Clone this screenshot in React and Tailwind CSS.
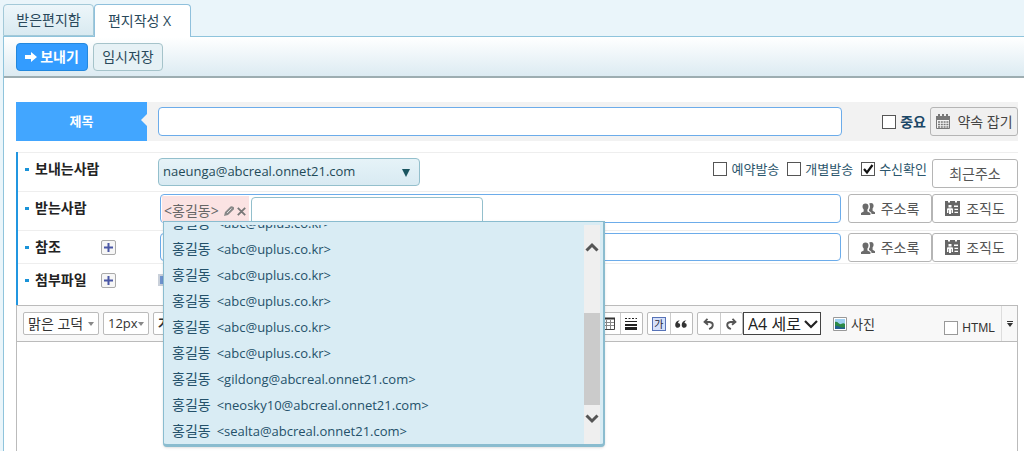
import React, { useState } from 'react';

const contacts = [
  'abc@uplus.co.kr',
  'abc@uplus.co.kr',
  'abc@uplus.co.kr',
  'abc@uplus.co.kr',
  'abc@uplus.co.kr',
  'abc@uplus.co.kr',
  'gildong@abcreal.onnet21.com',
  'neosky10@abcreal.onnet21.com',
  'sealta@abcreal.onnet21.com',
];

const Check = ({ label, checked, onChange, className = '', box = 'border-[#555]' }) => (
  <label className={`flex items-center gap-1 whitespace-nowrap ${className}`}>
    <span className="relative block h-3.5 w-3.5">
      <input type="checkbox" checked={checked} onChange={onChange} className={`block h-3.5 w-3.5 appearance-none border bg-white ${box}`} />
      {checked && (
        <svg viewBox="0 0 14 14" className="pointer-events-none absolute inset-0 h-3.5 w-3.5">
          <path d="M3 7l3 3.5L11.5 3" fill="none" stroke="#111" strokeWidth="2.2" />
        </svg>
      )}
    </span>
    {label}
  </label>
);

const GrayButton = ({ children, className = '' }) => (
  <button className={`flex h-[29px] items-center justify-center gap-1.5 rounded-[3px] border border-[#b5b5b5] text-sm leading-5 whitespace-nowrap ${className}`}>
    {children}
  </button>
);

const PeopleIcon = () => (
  <svg viewBox="0 0 14 14" className="h-3.5 w-3.5" fill="#6b6b6b">
    <path d="M8.2 1.600C8.700 1.200 9.300 1 10 1c1.700 0 2.600 1.200 2.600 2.800 0 1-.4 2-1 2.600v2.400l2.400 1.400V12H10.600c-.2-1.200-.6-1.700-1.400-2.200L8 9V7.800c.7-.8 1-1.900 1-3.100 0-1.200-.3-2.300-.8-3.100z" />
    <path d="M4.500 1.500c1.900 0 3 1.300 3 3.100 0 1.200-.4 2.200-1.100 2.900v2l3 1.500V13H0v-2l2.700-1.500v-2C2 6.800 1.500 5.800 1.500 4.600c0-1.800 1.100-3.100 3-3.100z" />
  </svg>
);

const OrgIcon = () => (
  <svg viewBox="0 0 15 15" className="h-[15px] w-[15px]">
    <path fill="#666" d="M0 0h3v1.500h2V0h5v1.500h2V0h3v15H0z" />
    <path fill="#fff" d="M3.500 4h3v2.500h-3zM2 12V8.500c0-.8.5-1.200 1.200-1.200h3.600c.7 0 1.200.4 1.200 1.200V12H6.600V9H6v4H4V9h-.6v3zM9 4.500h4V6H9zM9.500 7.800H13V9H9.500zM9.500 10.800H13V12H9.500z" />
  </svg>
);

const CalendarIcon = () => (
  <svg viewBox="0 0 16 15" className="h-[15px] w-4">
    <path fill="#777" d="M1 2h2V0h2v2h2V0h2v2h2V0h2v2h2v4H1z" />
    <path fill="#f4f4f4" stroke="#777" d="M1.500 5.500h13v9h-13z" />
    <path d="M3 8h10.500M3 10.500h10.500M3 13h10.500" stroke="#777" strokeWidth="1.500" strokeDasharray="2 .8" />
  </svg>
);

const Plus = ({ label }) => (
  <button aria-label={label} className="flex h-[15px] w-[15px] items-center justify-center rounded-[2px] border border-[#aaa] bg-[#f6f6f6]">
    <svg viewBox="0 0 9 9" className="h-[9px] w-[9px]"><path d="M4.500 0v9M0 4.500h9" stroke="#4a57a5" strokeWidth="2" /></svg>
  </button>
);

const Row = ({ label, htmlFor, plus, height, children }) => (
  <div className={`flex items-start border-t border-[#eee] pt-[2px] ${height}`}>
    <div className="flex h-7 w-[140px] shrink-0 items-center pl-[7px]">
      <span className="mr-1.5 h-[3px] w-1 bg-[#1a93d8]" />
      <label htmlFor={htmlFor} className="w-[66px] text-sm leading-5 font-bold whitespace-nowrap text-[#222]">{label}</label>
      {plus && <Plus label={plus} />}
    </div>
    {children}
  </div>
);

const AddressButtons = () => (
  <div className="ml-[7px] flex">
    <GrayButton className="w-[84px] bg-white text-[#555]"><PeopleIcon />주소록</GrayButton>
    <GrayButton className="w-[86px] bg-white text-[#555]"><OrgIcon />조직도</GrayButton>
  </div>
);

const Suggestions = () => (
  <div className="absolute top-[26px] left-[2px] z-10 flex h-[226px] w-[442px] rounded-b-[4px] border border-r-[2px] border-b-[3px] border-[#8abccf] bg-[#d9ecf4] pt-[3px] pr-[3px] shadow-sm">
    <ul className="flex flex-1 flex-col justify-end overflow-hidden text-[13px] text-[#24516a]">
      {contacts.map((email, i) => (
        <li key={i} className="flex h-[26px] shrink-0 gap-1.5 pl-2 leading-[26px] whitespace-nowrap">
          <span className="text-sm leading-[26px]">홍길동</span>
          <span>&lt;{email}&gt;</span>
        </li>
      ))}
    </ul>
    <div className="flex w-4 flex-col items-center bg-[#efefef]">
      <svg viewBox="0 0 14 10" className="mt-[17px] h-2.5 w-3.5"><path d="M1.500 8.500L7 3l5.500 5.500" fill="none" stroke="#555" strokeWidth="3" /></svg>
      <div className="mt-[61px] h-[92px] w-4 bg-[#cbcbcb]" />
      <svg viewBox="0 0 14 10" className="mt-[9px] h-2.5 w-3.5"><path d="M1.500 1.500L7 7l5.500-5.500" fill="none" stroke="#555" strokeWidth="3" /></svg>
    </div>
  </div>
);

const Tool = ({ label, children }) => (
  <button aria-label={label} className="flex h-full flex-1 items-center justify-center border-l border-[#ccc] first:border-l-0">{children}</button>
);

const toolGroup = 'flex h-[23px] shrink-0 items-center rounded-[2px] border border-[#bbb] bg-white';

const Caret = () => (
  <svg viewBox="0 0 6 4" className="h-1 w-1.5"><path d="M0 0h6L3 4z" fill="#888" /></svg>
);

const EditorToolbar = () => {
  const [html, setHtml] = useState(false);

  return (
    <div className="flex h-9 items-center gap-1 border-b border-[#bbb] bg-[#f8f8f8] pl-1.5 text-[#333]">
      <button className={`${toolGroup} w-[76px] justify-between px-1 text-sm leading-5`}>맑은 고덕<Caret /></button>
      <button className={`${toolGroup} w-[46px] justify-between px-1 text-[13px]`}>12px<Caret /></button>
      <div className={`${toolGroup} w-[440px] px-1 text-[13px]`}>
        <button className="font-bold">가</button>
      </div>
      <div className={`${toolGroup} w-[46px]`}>
        <Tool label="표">
          <svg viewBox="0 0 13 13" className="h-[13px] w-[13px]" fill="none">
            <path d="M.5 1.500h12v11H.5z" fill="#fff" stroke="#444" /><path d="M0 1.500h13" stroke="#333" strokeWidth="2" />
            <path d="M1 5.500h11M1 8.500h11M4.500 3v9M8.500 3v9" stroke="#888" />
          </svg>
        </Tool>
        <Tool label="구분선">
          <svg viewBox="0 0 12 13" className="h-[13px] w-3" fill="none" stroke="#222">
            <path d="M0 1.500h12" strokeDasharray="2 1.500" /><path d="M0 4.500h12" /><path d="M0 8h12" strokeWidth="2" /><path d="M0 11.500h12" strokeWidth="3" />
          </svg>
        </Tool>
      </div>
      <div className={`${toolGroup} w-[46px]`}>
        <Tool label="글상자">
          <span className="flex h-3.5 w-3.5 items-center justify-center border border-[#5773b8] bg-[#d5e0fa] text-[10px] leading-3 text-[#223]">가</span>
        </Tool>
        <Tool label="인용구">
          <svg viewBox="0 0 12 8" className="h-2 w-3" fill="#333">
            <path d="M5 .3C3.800 1 3.200 1.900 3 3c1.200 0 2.200.9 2.200 2.300S4.200 7.800 2.800 7.800C1.200 7.800.2 6.600.2 4.900.2 2.600 1.800.7 5 .3zM11.500.3C10.300 1 9.700 1.900 9.500 3c1.200 0 2.200.9 2.200 2.300S10.700 7.800 9.300 7.800c-1.600 0-2.600-1.200-2.600-2.900C6.700 2.600 8.300.7 11.500.3z" />
          </svg>
        </Tool>
      </div>
      <div className={`${toolGroup} w-[46px]`}>
        <Tool label="실행 취소">
          <svg viewBox="0 0 12 12" className="h-3 w-3" fill="none" stroke="#555" strokeWidth="1.800"><path d="M4.500.8L1.500 4l3.500 2.800M2 4h4.500c4.500.5 4.500 5.500-.5 7" /></svg>
        </Tool>
        <Tool label="다시 실행">
          <svg viewBox="0 0 12 12" className="h-3 w-3" fill="none" stroke="#555" strokeWidth="1.800"><path d="M7.500.8l3 3.200L7 6.800M10 4H5.500C1 4.500 1 9.500 6 11" /></svg>
        </Tool>
      </div>
      <div className="relative shrink-0">
        <select aria-label="용지" className="-ml-1 block h-[23px] w-[78px] appearance-none border border-[#444] bg-white pl-1 text-base leading-5 text-[#222]">
          <option>A4 세로</option>
        </select>
        <svg viewBox="0 0 14 9" className="pointer-events-none absolute top-2 right-[3px] h-[9px] w-3.5"><path d="M1 1l6 6 6-6" fill="none" stroke="#222" strokeWidth="2.200" /></svg>
      </div>
      <button className="ml-2 flex shrink-0 items-center gap-1 text-[13px] leading-5">
        <svg viewBox="0 0 14 14" className="h-3.5 w-3.5">
          <path d="M.5.5h13v13H.5z" fill="#fff" stroke="#999" /><path d="M2 2h10v10H2z" fill="#9fd0f2" />
          <path d="M2 5c3-1 4 3 6 2s3-1 4 0v5H2z" fill="#2c8a45" /><path d="M2 9c3-1 6 3 10 1v2H2z" fill="#245f8f" />
        </svg>
        사진
      </button>
      <Check label="HTML" checked={html} onChange={() => setHtml(!html)} box="border-[#999]" className="mt-2 ml-auto font-['Liberation_Sans',sans-serif] text-xs leading-4" />
      <button aria-label="더보기" className="ml-0.5 flex h-full w-4 shrink-0 items-center justify-center border-l border-[#ddd]">
        <svg viewBox="0 0 6 6" className="h-1.5 w-1.5" fill="#333"><path d="M0 0h6v1H0zM0 2h6L3 6z" /></svg>
      </button>
    </div>
  );
};

const App = () => {
  const [options, setOptions] = useState({ important: false, reserve: false, each: false, receipt: true });
  const toggle = (key) => () => setOptions({ ...options, [key]: !options[key] });

  return (
    <div className="flex min-h-screen flex-col overflow-hidden bg-[#eaf5fa] pl-[3px] font-['Open_Sans','Noto_Sans_CJK_KR',sans-serif]">
      <nav className="flex h-9 items-end pt-1 text-sm text-[#29485a]">
        <button className="h-8 w-[91px] rounded-t-[4px] border border-[#a3c9d8] bg-linear-to-b from-[#edf6fa] to-[#d9eaf1] leading-5">받은편지함</button>
        <button className="relative -mb-px h-[33px] w-[97px] rounded-t-[4px] border border-b-0 border-[#8fc0dc] bg-white pr-1.5 leading-5">편지작성 X</button>
      </nav>

      <main className="flex flex-1 flex-col border-t border-l border-[#8fc4dc] bg-white">
        <div className="flex h-[41px] items-center gap-[5px] border-b-2 border-[#9dadb1] bg-linear-to-b from-white to-[#dcebf2] pl-3 text-sm">
          <button className="flex h-7 w-[72px] items-center justify-center gap-[3px] rounded-[4px] border border-[#2388dd] bg-[#339cff] leading-5 font-bold text-white">
            <svg viewBox="0 0 12 12" className="h-3 w-3"><path d="M0 4h6V1l6 5-6 5V8H0z" fill="#fff" /></svg>
            보내기
          </button>
          <button className="h-7 w-[70px] rounded-[4px] border border-[#a5c3ca] bg-[#e6f1f5] leading-5 text-[#29485a]">임시저장</button>
        </div>

        <div className="flex flex-1 flex-col pt-6 pr-1.5 pl-3">
          <div className="flex h-[39px] items-center bg-[#f2f2f2]">
            <label htmlFor="subject" className="relative flex h-full w-[131px] shrink-0 items-center justify-center bg-[#42a6ff] text-[13px] font-bold text-white">
              제목
              <svg viewBox="0 0 6 12" className="absolute top-3 right-0 h-3 w-1.5"><path d="M6 0v12L0 6z" fill="#f2f2f2" /></svg>
            </label>
            <input id="subject" className="ml-[11px] h-[29px] min-w-0 flex-1 rounded-[4px] border border-[#6cacea] bg-white px-2 text-sm" />
            <div className="flex w-[176px] shrink-0 items-center justify-end gap-1">
              <Check label="중요" checked={options.important} onChange={toggle('important')} className="text-sm leading-5 font-bold text-[#1b4766]" />
              <GrayButton className="w-[88px] bg-[#f0f0f0] text-[#444]"><CalendarIcon />약속 잡기</GrayButton>
            </div>
          </div>

          <section className="mt-[11px] h-[153px] border-l-2 border-[#2196e0]">
            <Row label="보내는사람" htmlFor="from" height="h-[39px]">
              <div className="relative mt-[3px]">
                <select id="from" className="block h-7 w-[262px] appearance-none rounded-[4px] border border-[#93bfcc] bg-linear-to-b from-[#e6f3f8] to-[#d8eaf2] pl-1 text-[13px] text-[#1f4a58]">
                  <option>naeunga@abcreal.onnet21.com</option>
                </select>
                <svg viewBox="0 0 8 8" className="pointer-events-none absolute top-[11px] right-2.5 h-2 w-2"><path d="M0 0h8L4 8z" fill="#1a5560" /></svg>
              </div>
              <div className="ml-auto flex h-7 items-center gap-2 text-[13px] leading-5 text-[#2c566c]">
                <Check label="예약발송" checked={options.reserve} onChange={toggle('reserve')} />
                <Check label="개별발송" checked={options.each} onChange={toggle('each')} />
                <Check label="수신확인" checked={options.receipt} onChange={toggle('receipt')} />
              </div>
              <GrayButton className="mt-1 ml-[5px] w-[86px] bg-white text-[#555]">최근주소</GrayButton>
            </Row>
            <Row label="받는사람" htmlFor="to" height="h-[39px]">
              <div className="relative ml-0.5 flex h-[29px] min-w-0 flex-1 rounded-[4px] border border-[#6cacea] pt-px pl-px">
                <span className="flex w-[87px] items-center gap-[3px] bg-[#fbe3e3] pt-1 pl-0.5 text-sm leading-5 whitespace-nowrap text-[#666]">
                  <span className="mr-0.5">&lt;홍길동&gt;</span>
                  <button aria-label="수정">
                    <svg viewBox="0 0 10 10" className="h-2.5 w-2.5"><path d="M0 10l1-4 5.500-5.500Q8-.3 9.500 1t.2 2.500L4 9z" fill="#888" /><path d="M3 7l4.500-4.500" stroke="#ddd" /></svg>
                  </button>
                  <button aria-label="삭제">
                    <svg viewBox="0 0 9 9" className="h-[9px] w-[9px]"><path d="M.8.8l7.400 7.400M8.200.8L.8 8.200" stroke="#777" strokeWidth="1.800" /></svg>
                  </button>
                </span>
                <input id="to" className="mt-px ml-0.5 h-7 w-[232px] rounded-[4px] border border-[#93bfcc] bg-white px-1 text-[13px]" />
                <Suggestions />
              </div>
              <AddressButtons />
            </Row>
            <Row label="참조" htmlFor="cc" plus="참조 추가" height="h-[33px]">
              <input id="cc" className="ml-0.5 h-7 min-w-0 flex-1 rounded-[4px] border border-[#6cacea] bg-white px-1 text-[13px]" />
              <AddressButtons />
            </Row>
            <Row label="첨부파일" htmlFor="attach" plus="첨부파일 추가" height="h-[42px]">
              <button id="attach" aria-label="파일 첨부" className="mt-2 h-3 w-3 border-2 border-[#c9d0da] bg-[#6f93cf]" />
            </Row>
          </section>

          <div className="flex-1 border border-b-0 border-[#bbb]">
            <EditorToolbar />
          </div>
        </div>
      </main>
    </div>
  );
};

export default App;
